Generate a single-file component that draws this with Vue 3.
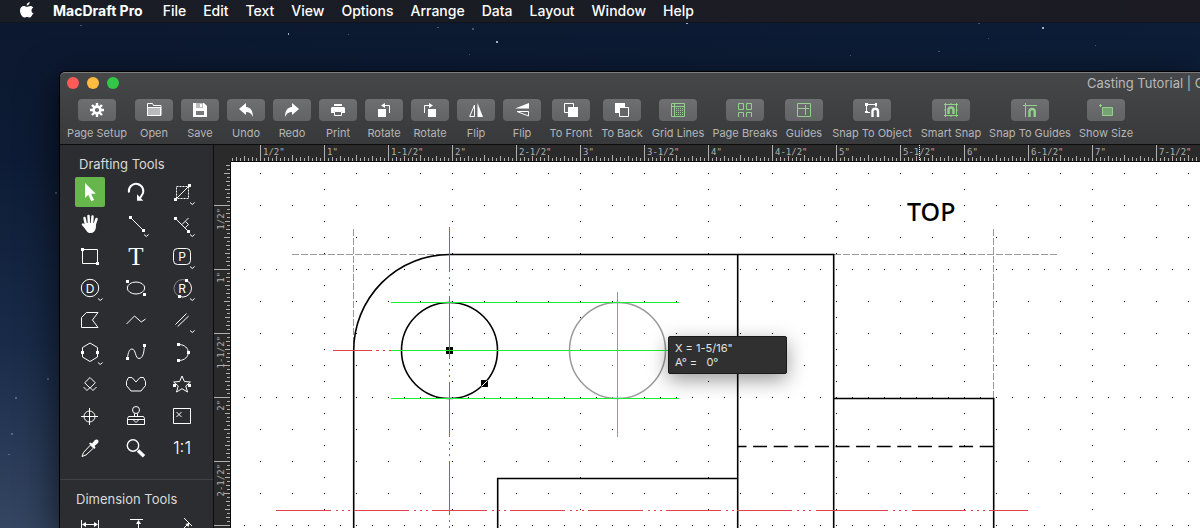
<script setup>
const menus = ['File', 'Edit', 'Text', 'View', 'Options', 'Arrange', 'Data', 'Layout', 'Window', 'Help']

const W = 'fill="#fff" stroke="none"'
const G = 'stroke="#93d08c"'

const actions = [
  { label: 'Page Setup', art: `<circle cx="19" cy="11" r="3.4" stroke-width="2.6"/><path stroke-width="2.4" d="M19 4v3M19 15v3M12 11h3M23 11h3M14 6l2.2 2.2M21.8 13.800l2.200 2.200M14 16l2.200-2.200M21.800 8.200l2.200-2.200"/>` },
  { label: 'Open', art: `<path d="M12.500 16.500v-12h5l1 2h7.500v10z"/><path fill="#b9babb" d="M12.500 8.500h13v8h-13z"/>` },
  { label: 'Save', art: `<path ${W} d="M12 4h11l3 3v11H12z"/><path fill="#77787a" stroke="none" d="M15 12h8v4h-8z"/><path fill="#bbb" stroke="none" d="M15 4h7v5h-7z"/><path ${W} d="M19 5h2v3h-2z"/>` },
  { label: 'Undo', art: `<path ${W} d="M12 10l7-6v4c5 .3 7 4.500 7 10-1.500-3.500-3.500-5-7-5v3z"/>` },
  { label: 'Redo', art: `<path ${W} d="M26 10l-7-6v4c-5 .3-7 4.500-7 10 1.500-3.500 3.500-5 7-5v3z"/>` },
  { label: 'Print', art: `<path ${W} d="M15 5h8v2h-8zM13 8h12l1 1v5h-3v-2h-8v2h-3V9z"/><path d="M15.500 12.500h7v4h-7z"/>` },
  { label: 'Rotate', art: `<path ${W} d="M13 10h8v8h-8zM16 6.500l4-2.500v5z"/><path d="M19 6.500h5.500V14"/>` },
  { label: 'Rotate', art: `<path ${W} d="M17 10h8v8h-8zM22 6.500l-4-2.500v5z"/><path d="M19 6.500h-5.500V14"/>` },
  { label: 'Flip', art: `<path d="M12.700 17.500h4.800V6z"/><path ${W} d="M20.500 4v14H26z"/>` },
  { label: 'Flip', art: `<path ${W} d="M12 9.500h14V4z"/><path d="M14 12.500h11.500v4.500z"/>` },
  { label: 'To Front', art: `<path d="M12.500 4.500h9v9h-9z"/><path ${W} d="M16 8h10v10H16z"/>` },
  { label: 'To Back', art: `<path ${W} d="M12 4h10v10H12z"/><path fill="#646567" d="M16.500 8.500h9v9h-9z"/>` },
  { label: 'Grid Lines', art: `<g ${G}><path d="M12.500 4.500h13v13h-13zM15.500 4.500v13M12.500 7.500h13"/><path stroke-dasharray="1 1" d="M17 9.500h7M17 11.500h7M17 13.500h7M17 15.500h7"/></g>` },
  { label: 'Page Breaks', art: `<path ${G} d="M12.500 4.500h5v6h-5zM20.500 4.500h5v6h-5zM12.500 18v-4.500h5V18M20.500 18v-4.500h5V18"/>` },
  { label: 'Guides', art: `<path ${G} d="M12.500 4.500h13v13h-13zM20.500 6v10M12.500 9.500H24"/>` },
  { label: 'Snap To Object', art: `<path d="M13.500 13V5.500H23V8M13.500 13.500H17"/><path ${W} d="M12 4h3v3h-3zM22 4h2v3h-2zM12 12h3v2h-3z"/><path stroke-width="2.400" d="M19.500 18v-6a2.800 2.800 0 0 1 5.500 0v6"/>` },
  { label: 'Smart Snap', art: `<g ${G}><path d="M13.500 5.500h11v11h-11zM12 5.500h14M12 16.500h14M13.500 4v14M24.500 4v14M19 4v2M12 11h2M24 11h2M19 16v2"/><path stroke-width="2.400" d="M16.500 15v-4a2.500 2.500 0 0 1 5 0v4"/></g>` },
  { label: 'Snap To Guides', art: `<g ${G}><path d="M12 6.500h14M14.500 4v14"/><path stroke-width="2.400" d="M18.500 18v-6a2.700 2.700 0 0 1 5.200 0v6"/></g>` },
  { label: 'Show Size', art: `<g ${G}><path fill="#76a373" d="M15.500 8.500h10v8h-10z"/><path d="M12 6.500h3M13.500 5v3"/></g>` }
]

// 3px square grips centred on each x,y pair
const grips = (...pts) =>
  `<path ${W} d="${pts.map(([x, y]) => `M${x - 1.5} ${y - 1.5}h3v3h-3z`).join('')}"/>`
const letter = (t) =>
  `<text x="15" y="19.500" font-size="12" text-anchor="middle" fill="#fff" stroke="none">${t}</text>`

const drafting = [
  { name: 'Select', on: true, art: `<path ${W} d="M10 6v15l3.300-3.200 3 6.400 2.800-1.300-3-6.200h4.700z"/>` },
  { name: 'Rotate', art: `<path stroke-width="2" d="M8 15.500a7.200 7.200 0 1 1 13 2.500l-2 3"/><path ${W} d="M16 17.300l6.300 6.400H16z"/>` },
  { name: 'Marquee', more: true, art: `<path stroke-dasharray="2 1" d="M9.500 9.500h12v12h-12z"/><path d="M8.500 22.500l14-14"/>${grips([8.5, 22.5], [22.5, 8.5])}` },
  { name: 'Pan', art: `<path stroke-width="2.500" stroke-linecap="round" d="M11 16L9.500 9M14 15l-.5-8M17 15l.5-7.500M19.500 16l2-6M11.500 19.500L8 15.500"/><path ${W} d="M10 14h10.500l.5 4c-.5 4-2.500 6-5.500 6s-4-1.500-5.500-5z"/>` },
  { name: 'Line', more: true, art: `<path d="M9.500 8.500l13 13"/>${grips([9.5, 8.5], [22.5, 21.5])}` },
  { name: 'Perpendicular', more: true, art: `<path d="M8.500 9.500l13 13M15 15.500l6.500-6.500M18.500 12.500l3 3-3 3"/>${grips([8.5, 9.5], [21.5, 22.5])}` },
  { name: 'Rectangle', art: `<path d="M7.500 8.500h15v14h-15z"/>${grips([7.5, 8.5], [22.5, 22.5])}` },
  { name: 'Text', art: `<text x="15" y="24" font-size="25" text-anchor="middle" font-family="Liberation Serif, serif" fill="#fff" stroke="none">T</text>` },
  { name: 'Parametric', more: true, art: `<rect x="6.500" y="7.500" width="17" height="16" rx="4"/>${letter('P')}` },
  { name: 'Circle by diameter', more: true, art: `<circle cx="15" cy="15" r="8.700"/>${letter('D')}` },
  { name: 'Ellipse', art: `<ellipse cx="15" cy="15" rx="8.700" ry="6"/>${grips([6.5, 8.5], [23.5, 21.5])}` },
  { name: 'Circle by radius', more: true, art: `<path d="M19 7.200a8.700 8.700 0 0 1-6.500 16.200"/><path stroke="#85868a" d="M19 7.200a8.700 8.700 0 0 0-6.500 16.200"/>${letter('R')}${grips([19.5, 7.5], [12.5, 23.5])}` },
  { name: 'Polygon', art: `<path d="M6.500 22.500v-10l5-5H23l-5.500 7.500 5.500 7.500z"/>` },
  { name: 'Polyline', art: `<path d="M5.500 19l8-8 6.800 6 4.200-3"/>` },
  { name: 'Parallel', more: true, art: `<path d="M8.500 19.500l11-11M10.700 21.500l11-10.500"/>` },
  { name: 'Regular polygon', more: true, art: `<path d="M15 6l7.500 4.500v9.500L15 24.500 7.500 20v-9.500z"/>${grips([7.5, 15.5], [22.5, 15.5])}` },
  { name: 'Spline', art: `<path d="M6.500 21.500C7 15 8.500 12 11 12c4 0 3 9.500 7 9.500 3.500 0 5-5 5.500-13"/>${grips([6.5, 21.5], [23.5, 8.5])}` },
  { name: 'Arc', art: `<path d="M11.500 7.500c13 0 13 16 0 16"/>${grips([11.5, 7.5], [21.5, 15.5], [11.5, 23.5])}` },
  { name: 'Duplicate', art: `<path d="M15 8.500l5.300 5.300-5.300 5.300-5.300-5.300zM8.500 18l3.500 3.500 3-3 3 3 3.500-3.500"/>` },
  { name: 'Freeform', art: `<path d="M5.500 12.500l2-4h3.500l4 4.500 4-4.500h3.500l2 4v4l-4.500 5.500H10l-4.500-5.500z"/>` },
  { name: 'Star', art: `<path d="M15 7l2.400 5.500 6 .5-4.600 4 1.700 6-5.500-3.300L9.500 23l1.700-6-4.600-4 6-.5z"/>${grips([7.5, 16.5], [22.5, 16.5])}` },
  { name: 'Reference point', art: `<circle cx="14.500" cy="15.500" r="5.500"/><path d="M6 15.500h17M14.500 7v17"/>` },
  { name: 'Stamp', art: `<circle cx="15" cy="9" r="3.500"/><path d="M13.500 12.500v3M16.500 12.500v3M6.500 18.500h17M7.500 15.500h15l1 2v6h-17v-6zM12 18.500l3 3 3-3"/>` },
  { name: 'Symbol box', art: `<path d="M6.500 7.500h17v15h-17zM9.500 11l5 5M14.500 11l-5 5"/>` },
  { name: 'Eyedropper', art: `<path d="M7 23.500l1.500-4L15.500 12l3 3-7.500 7z"/><path ${W} d="M14 10.500l1.500-1 1.500 1 3-3.500c2.500-1.500 4.500.5 3 3l-3.500 3 1 1.500-1 1.500z"/>` },
  { name: 'Zoom', art: `<circle cx="12" cy="12.500" r="5.700" stroke-width="1.400"/><path stroke-width="3.400" d="M17 17.500l6 5.800"/>` },
  { name: 'Actual size', art: `<text x="15" y="21" font-size="17" font-weight="300" text-anchor="middle" fill="#fff" stroke="none">1:1</text>` }
]

const dimension = [
  { name: 'Horizontal dimension', art: `<path d="M6.500 6v11M23.500 6v11M8 10.500h14"/><path ${W} d="M7 10.500l4-2.500v5zM23 10.500l-4-2.500v5z"/>` },
  { name: 'Vertical dimension', art: `<path d="M9 5.500h13M17.500 8v14"/><path ${W} d="M17.500 6l-2.500 4h5z"/>` },
  { name: 'Angled dimension', art: `<path d="M17 4l8 8M22 9l-10 10"/><path ${W} d="M22.500 9l-1 4-3-3z"/>` }
]

const range = (n, f) => Array.from({ length: n }, (_, i) => f(i))
const inches = (half) => {
  const whole = Math.floor(half / 2)
  if (half % 2 === 0) return `${whole}"`
  return whole ? `${whole}-1/2"` : '1/2"'
}
const topMarks = range(15, (i) => ({ at: 29 + i * 64, text: inches(i + 1) }))
const sideMarks = range(5, (i) => ({ at: 43 + i * 64, text: inches(i + 1) }))
</script>

<template>
  <div class="desktop">
    <svg class="stars" aria-hidden="true">
      <g fill="#9fb0c8">
        <path d="M288 33h1v2h-1zM496 41h2v2h-2zM1042 27h2v2h-2zM686 22h2v2h-2z" />
        <path opacity=".4" d="M80 25h2v1h-2zM437 27h2v1h-2zM472 28h2v2h-2zM469 54h1v1h-1zM1095 45h1v1h-1zM938 51h2v1h-2zM988 38h1v1h-1zM978 23h2v1h-2zM348 34h1v1h-1zM850 55h1v1h-1zM55 192h2v2h-2zM47 378h2v2h-2zM15 397h2v2h-2zM11 433h2v2h-2zM8 454h2v1h-2z" />
      </g>
    </svg>

    <nav class="menubar" aria-label="Menu bar">
      <button class="apple" aria-label="Apple menu">
        <svg width="14" height="16" viewBox="0 0 14 16"><path fill="#fff" d="M9.700 0c.1 1.800-1.400 3.500-3 3.500C6.500 1.900 8 .2 9.700 0zM12.600 12.300c-.9 1.900-1.700 3.100-2.900 3.200-1.100 0-1.400-.6-2.600-.6s-1.600.6-2.600.6C2 15.500 0 11.500 0 8.600c0-3 1.900-4.600 3.800-4.600 1.300 0 2.300.8 3.100.8.7 0 1.900-.9 3.400-.9 1.200 0 2.300.6 3 1.600-2.700 1.600-2.200 5.300.5 6.300-.3.300-.8.500-1.200.5z" /></svg>
      </button>
      <button class="app-name">MacDraft Pro</button>
      <button v-for="m in menus" :key="m">{{ m }}</button>
    </nav>

    <main class="window">
      <header class="chrome">
        <div class="titlebar">
          <div class="lights">
            <button class="close" aria-label="Close"></button>
            <button class="minimise" aria-label="Minimise"></button>
            <button class="full" aria-label="Zoom"></button>
          </div>
          <div class="title">Casting Tutorial | C</div>
        </div>
        <div class="toolbar" role="toolbar">
          <button v-for="(a, i) in actions" :key="i" class="action">
            <span class="key"><svg width="38" height="22" viewBox="0 0 38 22" fill="none" stroke="#fff" v-html="a.art"></svg></span>
            <span>{{ a.label }}</span>
          </button>
        </div>
      </header>

      <div class="body">
        <aside class="palette">
          <section class="drafting">
            <h2>Drafting Tools</h2>
            <div class="tools">
              <button v-for="t in drafting" :key="t.name" class="tool" :class="{ on: t.on }" :aria-label="t.name">
                <svg width="30" height="30" viewBox="0 0 30 30" fill="none" stroke="#fff">
                  <g v-html="t.art"></g>
                  <path v-if="t.more" d="M23 25.500l2.300 2 2.300-2" />
                </svg>
              </button>
            </div>
          </section>
          <section class="dimension">
            <h2>Dimension Tools</h2>
            <div class="tools">
              <button v-for="t in dimension" :key="t.name" class="tool" :aria-label="t.name">
                <svg width="30" height="30" viewBox="0 0 30 30" fill="none" stroke="#fff" v-html="t.art"></svg>
              </button>
            </div>
          </section>
        </aside>

        <div class="sheet">
          <div class="corner"></div>
          <svg class="ruler top">
            <defs>
              <pattern id="ticks-x" x="29" width="32" height="16" patternUnits="userSpaceOnUse">
                <path stroke="#b0b0b0" d="M.5 10v6M4.500 13v3M8.500 12v4M12.500 13v3M16.500 11v5M20.500 13v3M24.500 12v4M28.500 13v3" />
              </pattern>
            </defs>
            <rect width="100%" height="16" fill="url(#ticks-x)" />
            <g v-for="m in topMarks" :key="m.at">
              <rect :x="m.at" width="1" height="16" />
              <text :x="m.at + 3" y="10">{{ m.text }}</text>
            </g>
            <path stroke="#eee" stroke-dasharray="1 1" d="M688.500 0v16" />
          </svg>
          <svg class="ruler side">
            <defs>
              <pattern id="ticks-y" y="11" width="16" height="32" patternUnits="userSpaceOnUse">
                <path stroke="#b0b0b0" d="M10 .5h6M13 4.500h3M12 8.500h4M13 12.500h3M11 16.500h5M13 20.500h3M12 24.500h4M13 28.500h3" />
              </pattern>
            </defs>
            <rect width="16" height="100%" fill="url(#ticks-y)" />
            <g v-for="m in sideMarks" :key="m.at">
              <rect :y="m.at" width="16" height="1" />
              <text :transform="`translate(10 ${m.at + 3}) rotate(-90)`" text-anchor="end">{{ m.text }}</text>
            </g>
            <rect y="363" width="16" height="1" />
          </svg>

          <div class="canvas">
            <svg class="drawing" fill="none">
              <defs>
                <pattern id="dots" x="93" y="107" width="128" height="128" patternUnits="userSpaceOnUse">
                  <path stroke="#000" stroke-dasharray="1 31" d="M0 32.500h128M0 64.500h128M0 96.500h128" />
                  <path stroke="#000" stroke-dasharray="1 15" d="M0 .5h128M.5 0v128" />
                </pattern>
              </defs>
              <rect width="100%" height="100%" fill="url(#dots)" />
              <g transform="translate(-231 -162)">
                <g stroke="#999" stroke-dasharray="7 2">
                  <path d="M292 254.500h158M834 254.500h224M353.500 229v122M993.500 229v169" />
                </g>
                <g stroke="#000" stroke-width="1.600">
                  <path d="M353.700 528V350.500a96 96 0 0 1 96-96h384V528M737.700 254.500V528M833.700 398.500h160V528M497.700 528v-49.500h240" />
                  <path stroke-dasharray="14 6.600" stroke-dashoffset="5" d="M737.500 446.500h256" />
                  <circle cx="449.500" cy="350.500" r="48" />
                </g>
                <circle cx="617.500" cy="350.500" r="48" stroke="#999" stroke-width="1.500" fill="#fff" fill-opacity=".3" />
                <g stroke="#e0434b">
                  <path stroke-dasharray="45 5 2 4 2 4 2 5 63 4 2 4 2 4 2 5 55 5 2 4 2 4 2 5 54 5 2 4 2 4 2 5" d="M449.500 227v301" />
                  <path stroke-dasharray="39 4 3 4 2 4 2 4" d="M333 350.500h58" />
                  <path stroke-dasharray="55 5 2 4 2 4 2 4" d="M276 510.500h459" />
                  <path stroke-dasharray="55 5 2 4 2 4 2 5 72 5 2 4 2 4 2 5 54 5 2 4 2 4 2 4 40 0" d="M737 510.500h291" />
                </g>
                <path fill="#000" d="M446 347h7v7h-7zM481 380h7v7h-7z" />
                <path stroke="#fff" d="M481.500 386.500l6-6" />
                <path stroke="#19f02c" d="M391 302.500h288M391 398.500h288M391 350.500h278M617.500 292v145" />
                <path stroke="#4a7ab0" d="M449.500 347v7" />
                <text x="907" y="221" fill="#000" class="view-name">TOP</text>
              </g>
            </svg>
            <div class="readout" role="status">
              <div>X = 1-5/16"</div>
              <div>A° = &nbsp; 0°</div>
            </div>
          </div>
        </div>
      </div>
    </main>
  </div>
</template>

<style>
body {
  margin: 0;
}
</style>

<style scoped>
* {
  box-sizing: border-box;
}
.desktop {
  position: relative;
  display: flex;
  flex-direction: column;
  height: 100vh;
  overflow: hidden;
  font-family: Inter, "Liberation Sans", sans-serif;
  background: linear-gradient(90deg, rgba(12, 20, 42, 0.2), rgba(14, 34, 64, 0.4)),
    linear-gradient(#0b182e, #0d1d38 30%, #1c3050 65%, #3f5270);
}
button {
  padding: 0;
  border: 0;
  background: none;
  color: inherit;
  font: inherit;
}
svg {
  display: block;
}
.stars {
  position: absolute;
  inset: 0;
  width: 100%;
  height: 100%;
}
.menubar {
  position: relative;
  display: flex;
  align-items: center;
  gap: 17px;
  height: 23px;
  padding: 0 0 2px 20px;
  background: linear-gradient(90deg, #191d25, #1c1b24);
  border-bottom: 1px solid #10141e;
  color: #fff;
  font-size: 14px;
  font-weight: 500;
}
.app-name {
  margin: 0 3px 0 2px;
  font-weight: 700;
}
.window {
  position: relative;
  display: flex;
  flex: 1;
  flex-direction: column;
  min-height: 0;
  margin: 48px 0 0 59px;
  border-top: 1px solid #000;
  border-left: 1px solid #000;
  border-radius: 6px 0 0 0;
  box-shadow: 0 12px 36px 4px rgba(0, 0, 0, 0.6);
}
.chrome {
  height: 73px;
  overflow: hidden;
  border-top: 1px solid #7b7c7e;
  border-bottom: 1px solid #0c0c0d;
  border-radius: 5px 0 0 0;
  background: linear-gradient(#464749, #38393b);
}
.titlebar {
  display: flex;
  align-items: center;
  justify-content: space-between;
  height: 20px;
  padding-left: 7px;
  color: #b8b9ba;
  font-size: 13px;
  white-space: nowrap;
}
.lights {
  display: flex;
  gap: 8px;
}
.lights button {
  width: 12px;
  height: 12px;
  border-radius: 50%;
}
.close {
  background: #fc5b57;
}
.minimise {
  background: #fdbc40;
}
.full {
  background: #33c748;
}
.title {
  width: 113px;
}
.toolbar {
  display: grid;
  grid-template-columns: 68px repeat(9, 46px) 52px 50px 62px 72px 46px 90px 68px 90px 62px;
  padding: 6px 0 0 3px;
  color: #b5b6b8;
  font-size: 11px;
  line-height: 14px;
}
.action {
  display: flex;
  flex-direction: column;
  align-items: center;
  gap: 5px;
  white-space: nowrap;
}
.key {
  border-radius: 4px;
  background: linear-gradient(#6e6f71, #626365);
}
.body {
  display: flex;
  flex: 1;
  min-height: 0;
}
.palette {
  flex: none;
  width: 153px;
  overflow: hidden;
  background: #2c2d30;
}
.palette h2 {
  margin: 0;
  color: #dadadb;
  font-size: 13px;
  font-weight: 400;
  line-height: 16px;
}
.drafting {
  padding: 11px 7px 15px;
  border-bottom: 1px solid #414246;
}
.drafting h2 {
  margin: 0 0 4px 12px;
}
.dimension {
  padding: 11px 7px;
}
.dimension h2 {
  margin: 0 0 6px 9px;
}
.tools {
  display: grid;
  grid-template-columns: repeat(3, 46px);
  grid-auto-rows: 32px;
  place-items: center;
}
.tool {
  width: 30px;
  height: 30px;
  border-radius: 2px;
}
.tool.on {
  background: #66b64c;
}
.sheet {
  display: grid;
  flex: 1;
  grid-template-columns: 17px 1fr;
  grid-template-rows: 17px 1fr;
  min-width: 0;
  border-left: 1px solid #0c0c0d;
  background: #2a2a2a;
}
.ruler {
  width: 100%;
  height: 100%;
  overflow: hidden;
  fill: #b0b0b0;
  font: 9px "DejaVu Sans Mono", monospace;
}
.top {
  border-bottom: 1px solid #0a0a0a;
}
.side {
  border-right: 1px solid #0a0a0a;
}
.canvas {
  position: relative;
  overflow: hidden;
  background: #fff;
}
.drawing {
  width: 100%;
  height: 100%;
}
.view-name {
  font: 500 25px "Noto Sans", sans-serif;
}
.readout {
  position: absolute;
  top: 174px;
  left: 437px;
  width: 119px;
  padding: 4px 6px;
  border: 1px solid #1a1a1a;
  border-radius: 2px;
  background: #303030;
  box-shadow: 0 6px 20px rgba(0, 0, 0, 0.4);
  color: #e4e4e4;
  font-size: 11px;
  line-height: 14px;
}
</style>
